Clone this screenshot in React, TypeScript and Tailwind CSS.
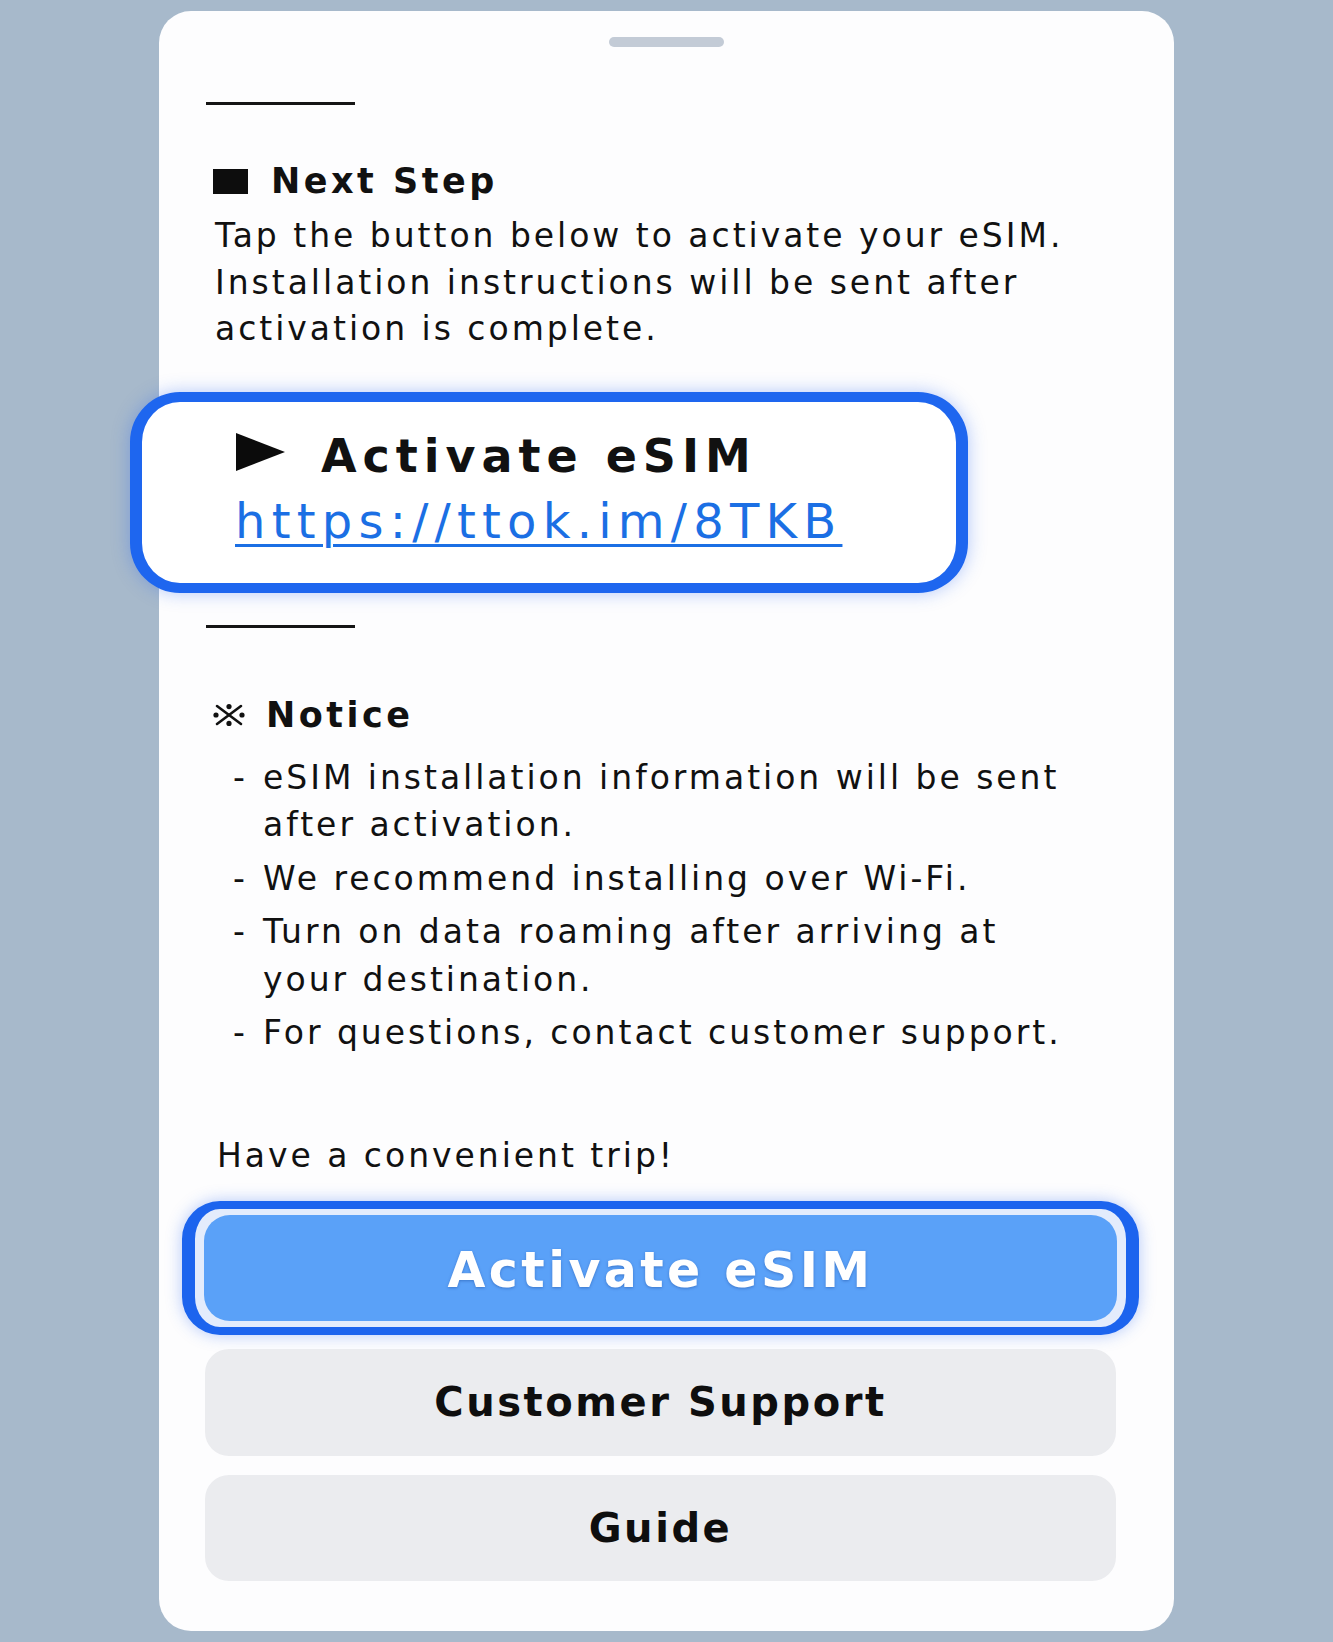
import React from "react";

const notices: string[][] = [
  ["eSIM installation information will be sent", "after activation."],
  ["We recommend installing over Wi-Fi."],
  ["Turn on data roaming after arriving at", "your destination."],
  ["For questions, contact customer support."],
];

const Divider: React.FunctionComponent<{ className?: string }> = ({ className = "" }) => (
  <div className={`ml-px h-[3px] w-[149px] bg-[#151515] ${className}`} />
);

const ReferenceMark: React.FunctionComponent = () => (
  <svg width="32" height="22" viewBox="0 0 32 22" className="shrink-0">
    <g stroke="#111" strokeWidth="2.6" strokeLinecap="round">
      <line x1="4" y1="2" x2="28" y2="20" />
      <line x1="28" y1="2" x2="4" y2="20" />
    </g>
    <g fill="#111">
      <circle cx="16" cy="2.6" r="2.6" />
      <circle cx="16" cy="19.4" r="2.6" />
      <circle cx="3" cy="11" r="2.6" />
      <circle cx="29" cy="11" r="2.6" />
    </g>
  </svg>
);

const PlayMark: React.FunctionComponent = () => (
  <svg width="49" height="38" viewBox="0 0 49 38" className="mb-[8px] shrink-0">
    <polygon points="0,0 49,19 0,38" fill="#0b0b0b" />
  </svg>
);

const App: React.FunctionComponent = () => (
  <div className="min-h-screen bg-[#a7b9cb] py-[11px] font-['DejaVu_Sans',sans-serif] text-[#111]">
    <div className="mx-auto flex w-[1015px] flex-col rounded-[32px] bg-[#fdfdfe] pt-[26px] pr-[58px] pb-[50px] pl-[46px]">
      {/* sheet handle */}
      <div className="mx-auto h-[10px] w-[115px] translate-x-[6px] rounded-full bg-[#c3cbd6]" />

      <Divider className="mt-[55px]" />

      <div className="mt-[56px] ml-[8px] flex h-[40px] items-center gap-[23px]">
        <div className="h-[25px] w-[35px] shrink-0 bg-[#0d0d0d]" />
        <h2 className="text-[35px] leading-[40px] font-bold tracking-[0.1em]">Next Step</h2>
      </div>

      <p className="mt-[12px] ml-[10px] text-[33px] leading-[46.5px] tracking-[0.09em] whitespace-nowrap">
        Tap the button below to activate your eSIM.
        <br />
        Installation instructions will be sent after
        <br />
        activation is complete.
      </p>

      <div className="mt-[39px] -ml-[75px] w-[838px] rounded-[50px] border-x-[12px] border-y-[10px] border-[#1e66ef] bg-white pt-[28px] pb-[35px] pl-[93px] shadow-[0_0_18px_rgba(40,100,240,0.35)]">
        <div className="flex h-[52px] items-center gap-[36px] pl-px">
          <PlayMark />
          <span className="text-[46px] leading-[52px] font-bold tracking-[0.13em] whitespace-nowrap">
            Activate eSIM
          </span>
        </div>
        <a
          href="#activate"
          className="mt-[12px] block text-[48px] leading-[54px] tracking-[0.13em] whitespace-nowrap text-[#1b6fe4] underline decoration-[3px] underline-offset-[6px]"
        >
          https://ttok.im/8TKB
        </a>
      </div>

      <Divider className="mt-[32px]" />

      <div className="mt-[67px] ml-[8px] flex h-[40px] items-center gap-[21px]">
        <ReferenceMark />
        <h2 className="text-[35px] leading-[40px] font-bold tracking-[0.1em]">Notice</h2>
      </div>

      <ul className="mt-[19px] ml-[28px] flex flex-col gap-[6px] text-[33px] leading-[47.5px] tracking-[0.09em]">
        {notices.map((lines) => (
          <li key={lines[0]} className="flex">
            <span className="w-[30px] shrink-0">-</span>
            <span className="whitespace-nowrap">
              {lines.map((line) => (
                <span key={line} className="block">
                  {line}
                </span>
              ))}
            </span>
          </li>
        ))}
      </ul>

      <p className="mt-[76.5px] ml-[12px] text-[33px] leading-[46.5px] tracking-[0.09em]">
        Have a convenient trip!
      </p>

      <button
        type="button"
        className="mt-[21px] -mx-[23px] flex h-[134px] rounded-[38px] border-x-[13px] border-y-[8px] border-[#1c64ee] bg-[#e3ecfc] px-[9px] py-[6px] shadow-[0_0_16px_rgba(40,100,240,0.35)]"
      >
        <span className="flex flex-1 items-center justify-center rounded-[26px] bg-[#5aa1f8] pt-[6px] text-[49px] font-bold tracking-[0.07em] text-white [text-shadow:0_1px_3px_rgba(0,40,120,0.35)]">
          Activate eSIM
        </span>
      </button>

      <button
        type="button"
        className="mt-[14px] flex h-[107px] items-center justify-center rounded-[24px] bg-[#ebecef] text-[40px] font-bold tracking-[0.064em] text-[#0e0e0e]"
      >
        Customer Support
      </button>

      <button
        type="button"
        className="mt-[19px] flex h-[106px] items-center justify-center rounded-[24px] bg-[#ebecef] text-[40px] font-bold tracking-[0.064em] text-[#0e0e0e]"
      >
        Guide
      </button>
    </div>
  </div>
);

export default App;
